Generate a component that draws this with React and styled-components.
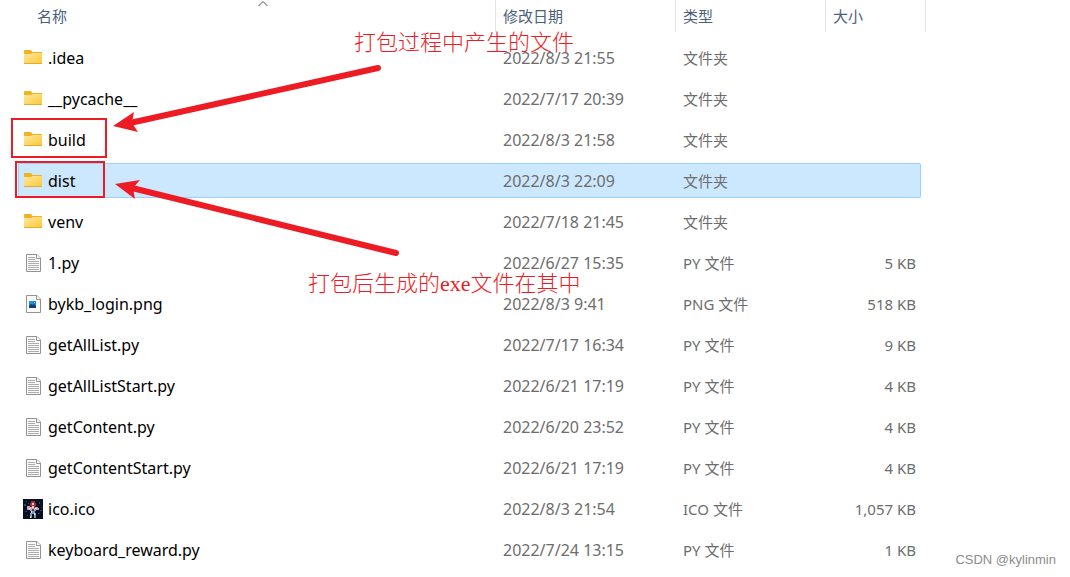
import React from "react";
import styled, { createGlobalStyle } from "styled-components";

const GlobalStyle = createGlobalStyle`
  * { box-sizing: border-box; }
  body {
    margin: 0;
    background: #fff;
    font-family: "Noto Sans", "Noto Sans CJK SC", sans-serif;
    font-size: 15px;
    line-height: 20px;
  }
`;

const RED = "#ed1c24";

const Page = styled.main`
  position: relative;
  padding-right: 144px;
  padding-bottom: 10px;
`;

const FileTable = styled.table`
  display: block;
`;

const Columns = styled.tr`
  display: grid;
  grid-template-columns: minmax(240px, 1fr) 180px 150px ${(p) => p.$last};
`;

const HeadGroup = styled.thead`
  display: block;
  padding-bottom: 8px;
`;

const HeadCell = styled.th`
  position: relative;
  height: 32px;
  padding: 0;
  border-right: 1px solid #e5e5e5;
  text-align: left;
  font-weight: 400;
`;

const SortButton = styled.button`
  display: block;
  width: 100%;
  height: 32px;
  padding: 0 0 0 ${(p) => (p.$first ? "37px" : "7px")};
  border: 0;
  background: none;
  color: #4c607a;
  font: inherit;
  text-align: left;
`;

const SortMark = styled.svg`
  position: absolute;
  top: 0;
  left: 0;
  right: 0;
  margin: 0 auto;
  transform: translateX(15px);
`;

const BodyGroup = styled.tbody`
  display: flex;
  flex-direction: column;
  gap: 6px;
`;

const FileRow = styled(Columns)`
  height: 35px;
  margin: 0 5px 0 18px;
  border-radius: 2px;
  background: ${(p) => (p.$selected ? "#cce8ff" : "transparent")};
  box-shadow: ${(p) => (p.$selected ? "inset 0 0 0 1px #99d1ff" : "none")};
`;

const Cell = styled.td`
  display: flex;
  align-items: center;
  padding: 0 5px 0 7px;
  color: #6d6d6d;
  font-size: ${(p) => (p.$large ? "16px" : "15px")};
  justify-content: ${(p) => (p.$right ? "flex-end" : "flex-start")};
  white-space: nowrap;
`;

const NameCell = styled(Cell)`
  gap: 5px;
  padding: 0 0 0 5px;
  color: #000;
`;

const Icon = styled.svg`
  flex: none;
`;

const Overlay = styled.div`
  position: absolute;
  inset: 0;
  pointer-events: none;
`;

const Frame = styled.div`
  position: absolute;
  left: ${(p) => p.$x}px;
  top: ${(p) => p.$y}px;
  width: ${(p) => p.$w}px;
  height: ${(p) => p.$h}px;
  border: 2px solid ${RED};
`;

const Arrows = styled.svg`
  position: absolute;
  left: 0;
  top: 0;
`;

const Note = styled.p`
  position: absolute;
  left: ${(p) => p.$x}px;
  top: ${(p) => p.$y}px;
  margin: 0;
  color: ${RED};
  font-family: "Liberation Serif", "Noto Sans CJK SC", serif;
  font-size: 22px;
  font-weight: 300;
  line-height: 28px;
  white-space: nowrap;
`;

const Watermark = styled.p`
  position: absolute;
  right: 14px;
  bottom: 7px;
  margin: 0;
  color: #8c8c8c;
  font-family: "Liberation Sans", sans-serif;
  font-size: 13px;
  line-height: 20px;
`;

function FolderIcon() {
  return (
    <Icon width="20" height="20" viewBox="0 0 20 20" aria-hidden="true">
      <defs>
        <linearGradient id="folderFace" x1="0" y1="0" x2="1" y2="1">
          <stop offset="0" stopColor="#ffe8a2" />
          <stop offset="1" stopColor="#fbc935" />
        </linearGradient>
      </defs>
      <path d="M1 2.500Q1 2 1.500 2H8L9.500 4H18.500q.5 0 .5.5V6H1Z" fill="#f0b323" />
      <path d="M1 6H8L9.500 5H19V15.500H1Z" fill="url(#folderFace)" />
      <path d="M1 15h18v.5q0 .5-.5.5h-17q-.5 0-.5-.5Z" fill="#e6ab2c" />
    </Icon>
  );
}

function Sheet({ children }) {
  return (
    <Icon width="20" height="20" viewBox="0 0 20 20" aria-hidden="true">
      <path d="M3.500 1.500H14L17.500 5V18.500H3.500Z" fill="#fafafa" stroke="#929292" />
      <path d="M13.500 1.500V5.500H17.500" fill="#fff" stroke="#929292" />
      {children}
    </Icon>
  );
}

function TextIcon() {
  return (
    <Sheet>
      <path
        d="M5 4.500h7M5 6.500h7M5 8.500h11M5 10.500h11M5 12.500h11M5 14.500h11M5 16.500h11"
        stroke="#adadad"
      />
    </Sheet>
  );
}

function PngIcon() {
  return (
    <Sheet>
      <path d="M6 7h7v7H6Z" fill="#1c83d8" />
      <path d="M6 7h4v3H6Z" fill="#1598ea" />
      <path d="M6 12l2-2 2 1 1-1 2 2v2H6Z" fill="#123c78" />
      <path d="M11 8h1v1h-1Z" fill="#dff4ff" />
    </Sheet>
  );
}

function IcoIcon() {
  return (
    <Icon width="20" height="20" viewBox="0 0 20 20" aria-hidden="true">
      <path d="M0 0h20v20H0Z" fill="#081020" />
      <path d="M1 5h2v2H1ZM3 2h1v1H3ZM16 3h1v2h-1ZM18 8h1v1h-1ZM2 12h2v1H2ZM15 14h2v1h-2ZM4 16h1v1H4ZM17 11h2v1h-2ZM5 4h1v1H5Z" fill="#244975" />
      <path d="M8 2h4v2h1v3h-1v2H8V7H7V4h1Z" fill="#a42e3d" />
      <path d="M9 4h2v2H9Z" fill="#f2c5bd" />
      <path d="M4 7h3v1h2v1h3V8h3v1h1v2h-3v1H7v-1H4Z" fill="#bfa5b5" />
      <path d="M6 9h2v1H6ZM12 9h2v1h-2ZM9 7h2v2H9Z" fill="#e9dfe8" />
      <path d="M8 11h4v3h1v5h-2v-4H9v4H7v-5h1Z" fill="#789bb8" />
      <path d="M8 12h1v2H8ZM11 14h1v2h-1ZM7 17h1v2H7Z" fill="#f1dce0" />
      <path d="M9 10h2v2H9Z" fill="#71364e" />
    </Icon>
  );
}

const ICONS = { folder: FolderIcon, text: TextIcon, png: PngIcon, ico: IcoIcon };

const FILES = [
  ["folder", ".idea", "2022/8/3 21:55", "文件夹", ""],
  ["folder", "__pycache__", "2022/7/17 20:39", "文件夹", ""],
  ["folder", "build", "2022/8/3 21:58", "文件夹", ""],
  ["folder", "dist", "2022/8/3 22:09", "文件夹", "", true],
  ["folder", "venv", "2022/7/18 21:45", "文件夹", ""],
  ["text", "1.py", "2022/6/27 15:35", "PY 文件", "5 KB"],
  ["png", "bykb_login.png", "2022/8/3 9:41", "PNG 文件", "518 KB"],
  ["text", "getAllList.py", "2022/7/17 16:34", "PY 文件", "9 KB"],
  ["text", "getAllListStart.py", "2022/6/21 17:19", "PY 文件", "4 KB"],
  ["text", "getContent.py", "2022/6/20 23:52", "PY 文件", "4 KB"],
  ["text", "getContentStart.py", "2022/6/21 17:19", "PY 文件", "4 KB"],
  ["ico", "ico.ico", "2022/8/3 21:54", "ICO 文件", "1,057 KB"],
  ["text", "keyboard_reward.py", "2022/7/24 13:15", "PY 文件", "1 KB"],
];

export default function App() {
  return (
    <Page>
      <GlobalStyle />
      <FileTable>
        <HeadGroup>
          <Columns $last="100px">
            <HeadCell scope="col">
              <SortButton $first>名称</SortButton>
              <SortMark width="12" height="8" viewBox="0 0 12 8" aria-hidden="true">
                <path d="M1.500 6L6 1.500L10.500 6" fill="none" stroke="#555" />
              </SortMark>
            </HeadCell>
            {["修改日期", "类型", "大小"].map((title) => (
              <HeadCell scope="col" key={title}>
                <SortButton>{title}</SortButton>
              </HeadCell>
            ))}
          </Columns>
        </HeadGroup>
        <BodyGroup>
          {FILES.map(([kind, name, date, type, size, selected]) => {
            const KindIcon = ICONS[kind];
            return (
              <FileRow key={name} $last="95px" $selected={selected}>
                <NameCell $large>
                  <KindIcon />
                  <span>{name}</span>
                </NameCell>
                <Cell $large>{date}</Cell>
                <Cell>{type}</Cell>
                <Cell $right>{size}</Cell>
              </FileRow>
            );
          })}
        </BodyGroup>
      </FileTable>
      <Overlay>
        <Frame $x={11} $y={118} $w={96} $h={40} />
        <Frame $x={15} $y={161} $w={90} $h={37} />
        <Arrows width="420" height="270" viewBox="0 0 420 270" aria-hidden="true">
          <g stroke={RED} strokeWidth="6" strokeLinecap="round">
            <path d="M130 123L378 68" />
            <path d="M132 188L396 253" />
          </g>
          <g fill={RED}>
            <path d="M113 126L134 112L132 123L138 132Z" />
            <path d="M115 184L140 180L133 188L135 199Z" />
          </g>
        </Arrows>
        <Note $x={354} $y={29}>打包过程中产生的文件</Note>
        <Note $x={308} $y={270}>打包后生成的exe文件在其中</Note>
      </Overlay>
      <Watermark>CSDN @kylinmin</Watermark>
    </Page>
  );
}
